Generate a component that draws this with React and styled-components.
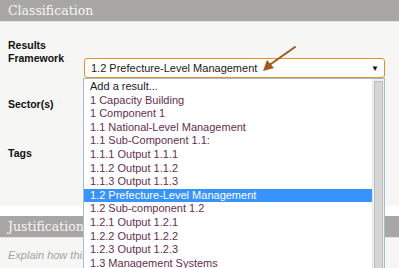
import React from 'react'
import styled, { createGlobalStyle } from 'styled-components'

const GlobalStyle = createGlobalStyle`
  html, body {
    margin: 0;
    padding: 0;
    background: #ffffff;
    font-family: "Liberation Sans", Arial, sans-serif;
    overflow: hidden;
  }
`

const Page = styled.div`
  position: relative;
  width: 399px;
  height: 268px;
  overflow: hidden;
`

const Section = styled.section`
  background: #f6f6f4;
  margin-top: ${({ gap }) => gap || 0}px;
`

const SectionHeader = styled.h2`
  margin: 0;
  height: 21px;
  line-height: 21px;
  padding: 0 8px;
  background: #a8a7a5;
  border-bottom: 1px solid #e4e4e2;
  color: #f5f5f3;
  font-family: "DejaVu Serif", "Liberation Serif", serif;
  font-size: 12.5px;
  font-weight: normal;
`

const FormBody = styled.div`
  display: flex;
  flex-direction: column;
  gap: 20px;
  padding: 17px 14px 37px 8px;
`

const Row = styled.div`
  display: grid;
  grid-template-columns: 76px 1fr;
  min-height: ${({ h }) => h}px;
`

const Label = styled.label`
  font-size: 10.5px;
  font-weight: bold;
  line-height: 13px;
  color: #111;
`

const Field = styled.div`
  position: relative;
  margin-top: ${({ offset }) => offset || 0}px;
`

const Select = styled.div`
  display: flex;
  align-items: center;
  justify-content: space-between;
  height: 18px;
  padding: 0 6px;
  background: #fff;
  border: 1px solid #e0902f;
  border-radius: 3px;
  font-size: 11px;
  color: #1a1a1a;
`

const Caret = styled.span`
  font-size: 8px;
  color: #111;
  margin-right: -1px;
`

const Input = styled.div`
  height: 20px;
  background: #fff;
  border: 1px solid #ccc;
  border-radius: 3px;
`

const Dropdown = styled.div`
  position: absolute;
  top: 100%;
  left: -1px;
  right: 0;
  height: 200px;
  display: flex;
  background: #fff;
  border: 1px solid #a9bcd3;
  border-bottom: none;
  overflow: hidden;
  z-index: 5;
`

const Options = styled.ul`
  flex: 1;
  margin: 0;
  padding: 1px 0 0;
  list-style: none;
`

const Option = styled.li`
  height: 13.6px;
  line-height: 13.6px;
  padding-left: 6px;
  font-size: 11px;
  white-space: nowrap;
  color: ${({ selected, placeholder }) =>
    selected ? '#ffffff' : placeholder ? '#1a1a1a' : '#66304f'};
  background: ${({ selected }) => (selected ? '#3793ff' : 'transparent')};
`

const ScrollTrack = styled.div`
  width: 12px;
  padding: 2px 1px 0;
  box-sizing: border-box;
  background: #f0f0f0;
  border-left: 1px solid #e6e6e6;
`

const ScrollThumb = styled.div`
  height: 100%;
  background: #d6d6d6;
  border: 1px solid #bdbdbd;
  border-bottom: none;
  box-sizing: border-box;
`

const Hint = styled.p`
  margin: 0;
  padding: 11px 8px 20px;
  font-size: 11px;
  font-style: italic;
  color: #a3a3a3;
`

const Pointer = styled.svg`
  position: absolute;
  left: 258px;
  top: 42px;
  z-index: 6;
`

const options = [
  'Add a result...',
  '1 Capacity Building',
  '1 Component 1',
  '1.1 National-Level Management',
  '1.1 Sub-Component 1.1:',
  '1.1.1 Output 1.1.1',
  '1.1.2 Output 1.1.2',
  '1.1.3 Output 1.1.3',
  '1.2 Prefecture-Level Management',
  '1.2 Sub-component 1.2',
  '1.2.1 Output 1.2.1',
  '1.2.2 Output 1.2.2',
  '1.2.3 Output 1.2.3',
  '1.3 Management Systems',
  '1.3.1 Output 1.3.1',
]

const selectedValue = '1.2 Prefecture-Level Management'

const App = () => {
  return (
    <Page>
      <GlobalStyle />
      <Section>
        <SectionHeader>Classification</SectionHeader>
        <FormBody>
          <Row h={39}>
            <Label>Results<br />Framework</Label>
            <Field offset={19}>
              <Select>
                {selectedValue}
                <Caret>▼</Caret>
              </Select>
              <Dropdown>
                <Options>
                  {options.map((label, index) => (
                    <Option
                      key={index}
                      placeholder={index === 0}
                      selected={label === selectedValue}
                    >
                      {label}
                    </Option>
                  ))}
                </Options>
                <ScrollTrack>
                  <ScrollThumb />
                </ScrollTrack>
              </Dropdown>
            </Field>
          </Row>
          <Row h={29}>
            <Label>Sector(s)</Label>
            <Field><Input /></Field>
          </Row>
          <Row h={13}>
            <Label>Tags</Label>
            <Field><Input /></Field>
          </Row>
        </FormBody>
      </Section>
      <Section gap={10}>
        <SectionHeader>Justification</SectionHeader>
        <Hint>Explain how this result relates to the activity</Hint>
      </Section>
      <Pointer width="42" height="34" viewBox="0 0 42 34">
        <line x1="37" y1="5" x2="10" y2="24" stroke="#a3581b" strokeWidth="2" strokeLinecap="round" />
        <polygon points="5,29 9,18 16,26" fill="#a3581b" />
      </Pointer>
    </Page>
  )
}

export default App
